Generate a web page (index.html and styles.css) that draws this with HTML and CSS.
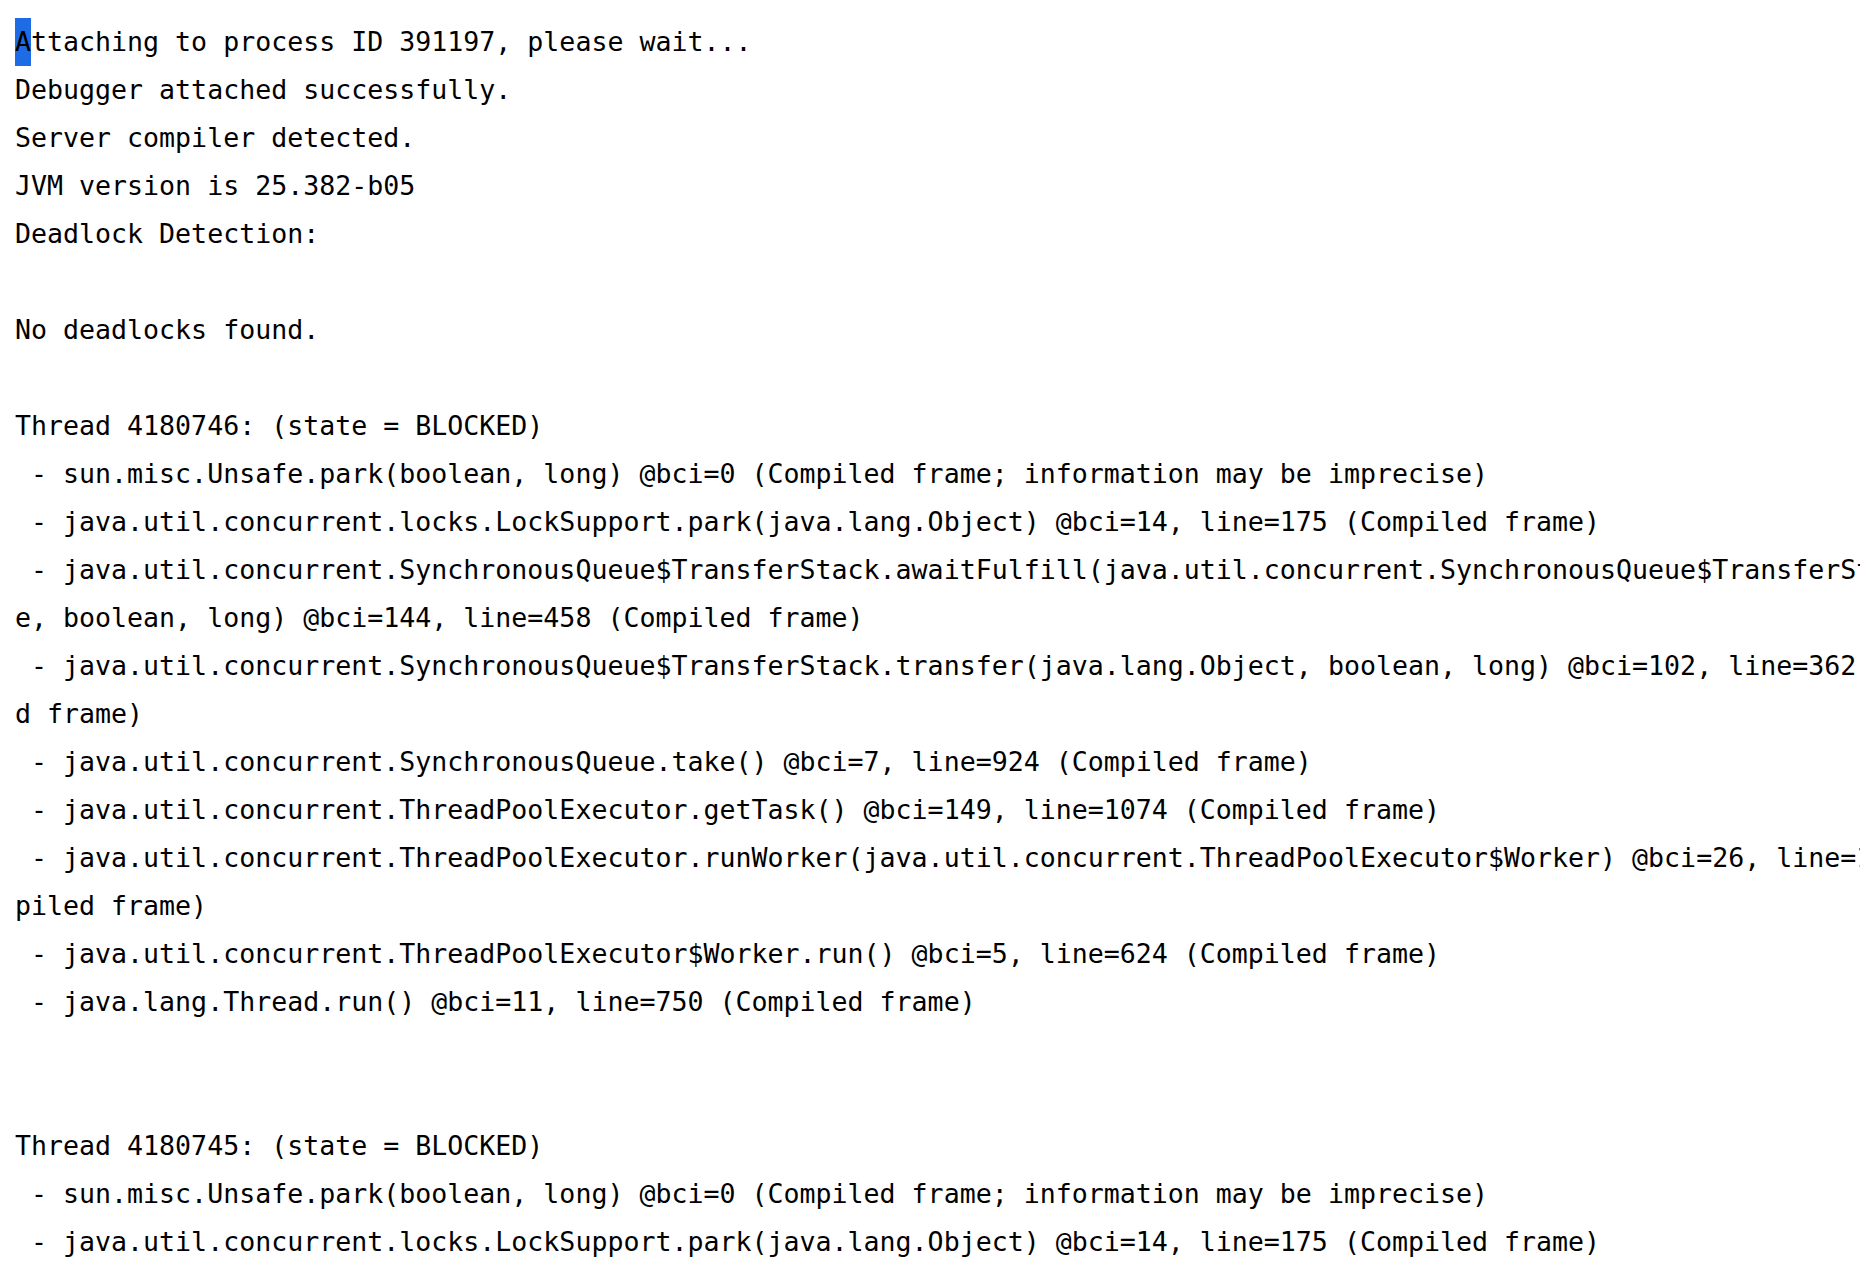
FILE: index.html
```html
<!DOCTYPE html>
<html lang="en">
<head>
<meta charset="utf-8">
<title>jstack output</title>
<link rel="stylesheet" href="styles.css">
</head>
<body>
<main class="terminal">
<div class="row"><span class="cursor">A</span>ttaching to process ID 391197, please wait...</div>
<div class="row">Debugger attached successfully.</div>
<div class="row">Server compiler detected.</div>
<div class="row">JVM version is 25.382-b05</div>
<div class="row">Deadlock Detection:</div>
<div class="row"></div>
<div class="row">No deadlocks found.</div>
<div class="row"></div>
<div class="row">Thread 4180746: (state = BLOCKED)</div>
<div class="row"> - sun.misc.Unsafe.park(boolean, long) @bci=0 (Compiled frame; information may be imprecise)</div>
<div class="row"> - java.util.concurrent.locks.LockSupport.park(java.lang.Object) @bci=14, line=175 (Compiled frame)</div>
<div class="row"> - java.util.concurrent.SynchronousQueue$TransferStack.awaitFulfill(java.util.concurrent.SynchronousQueue$TransferStack$SNod</div>
<div class="row">e, boolean, long) @bci=144, line=458 (Compiled frame)</div>
<div class="row"> - java.util.concurrent.SynchronousQueue$TransferStack.transfer(java.lang.Object, boolean, long) @bci=102, line=362 (Compile</div>
<div class="row">d frame)</div>
<div class="row"> - java.util.concurrent.SynchronousQueue.take() @bci=7, line=924 (Compiled frame)</div>
<div class="row"> - java.util.concurrent.ThreadPoolExecutor.getTask() @bci=149, line=1074 (Compiled frame)</div>
<div class="row"> - java.util.concurrent.ThreadPoolExecutor.runWorker(java.util.concurrent.ThreadPoolExecutor$Worker) @bci=26, line=1134 (Com</div>
<div class="row">piled frame)</div>
<div class="row"> - java.util.concurrent.ThreadPoolExecutor$Worker.run() @bci=5, line=624 (Compiled frame)</div>
<div class="row"> - java.lang.Thread.run() @bci=11, line=750 (Compiled frame)</div>
<div class="row"></div>
<div class="row"></div>
<div class="row">Thread 4180745: (state = BLOCKED)</div>
<div class="row"> - sun.misc.Unsafe.park(boolean, long) @bci=0 (Compiled frame; information may be imprecise)</div>
<div class="row"> - java.util.concurrent.locks.LockSupport.park(java.lang.Object) @bci=14, line=175 (Compiled frame)</div>
</main>
</body>
</html>
```
FILE: styles.css
```css
html, body {
  margin: 0;
  padding: 0;
  background: #ffffff;
}

body {
  width: 1860px;
  height: 1264px;
  overflow: hidden;
}

.terminal {
  display: flex;
  flex-direction: column;
  padding: 18px 0 0 15px;
  font-family: "DejaVu Sans Mono", "Liberation Mono", monospace;
  font-size: 26.6px;
  color: #000000;
  overflow: hidden;
}

.row {
  height: 48px;
  line-height: 48px;
  white-space: pre;
  flex: none;
}

.cursor {
  display: inline-block;
  background: #1d6ce6;
  height: 48px;
  vertical-align: top;
}
```
